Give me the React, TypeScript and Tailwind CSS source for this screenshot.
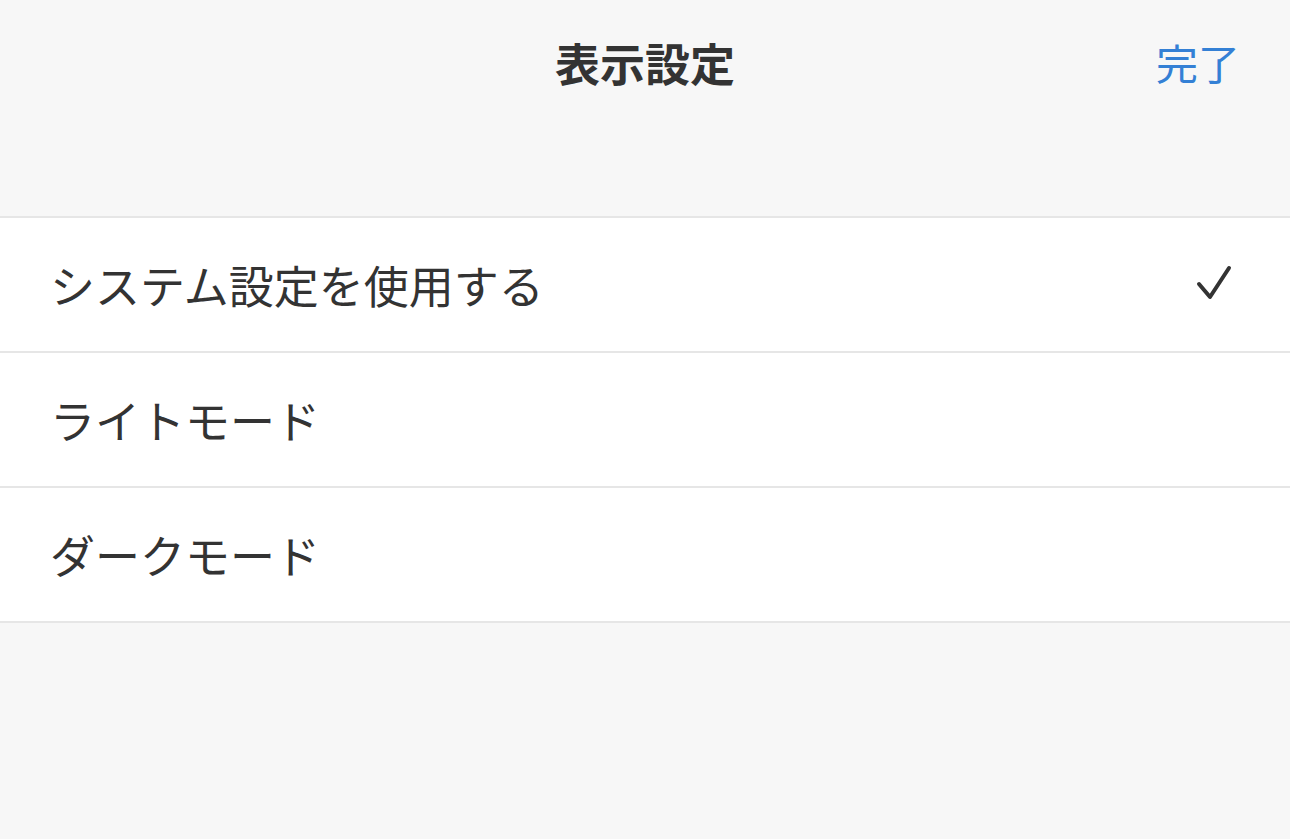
const options = ['システム設定を使用する', 'ライトモード', 'ダークモード'];

const CheckIcon = () => (
  <svg width="40" height="40" viewBox="0 0 40 40" fill="none" aria-hidden="true">
    <polyline
      points="4,19 15,32 34,3"
      stroke="#333333"
      strokeWidth="4"
      strokeLinecap="round"
      strokeLinejoin="round"
    />
  </svg>
);

export default function App() {
  const selected = 0;

  return (
    <div
      className="min-h-[839px] w-full bg-[#f7f7f7] text-[#333333]"
      style={{ fontFamily: '"Noto Sans CJK JP", "Noto Sans", sans-serif' }}
    >
      {/* Nav bar */}
      <div className="relative flex h-[124px] items-center justify-center">
        <h1 className="text-[45px] font-bold leading-none">表示設定</h1>
        <button className="absolute right-[50px] top-1/2 -translate-y-1/2 text-[42px] leading-none text-[#3480d5]">
          完了
        </button>
      </div>

      <div className="h-[92px]" />

      {/* Options */}
      <ul className="border-t-2 border-[#e6e6e6] bg-white">
        {options.map((label, i) => (
          <li
            key={label}
            className="flex h-[135px] items-center justify-between border-b-2 border-[#e6e6e6] pl-[50px] pr-[55px]"
          >
            <span className="text-[45px] leading-none">{label}</span>
            {i === selected && <CheckIcon />}
          </li>
        ))}
      </ul>
    </div>
  );
}
